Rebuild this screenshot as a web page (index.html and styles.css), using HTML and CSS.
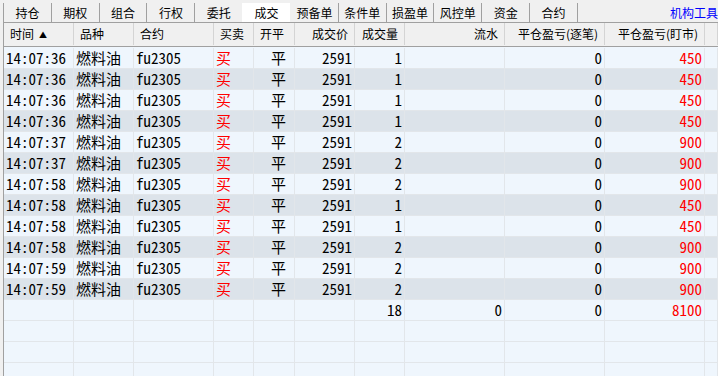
FILE: index.html
```html
<!DOCTYPE html>
<html lang="zh-CN">
<head>
    <meta charset="UTF-8">
    <title>成交</title>
    <link rel="stylesheet" href="styles.css">
</head>
<body>
<div class="tabbar">
    <span class="tab">持仓</span>
    <span class="tab">期权</span>
    <span class="tab">组合</span>
    <span class="tab">行权</span>
    <span class="tab">委托</span>
    <span class="tab active">成交</span>
    <span class="tab">预备单</span>
    <span class="tab">条件单</span>
    <span class="tab">损盈单</span>
    <span class="tab">风控单</span>
    <span class="tab">资金</span>
    <span class="tab">合约</span>
    <span class="tab last"></span>
    <span class="tools">机构工具</span>
</div>
<div class="grid">
    <div class="row head">
        <div class="th">时间<span class="sort">▲</span></div>
        <div class="th">品种</div>
        <div class="th">合约</div>
        <div class="th">买卖</div>
        <div class="th">开平</div>
        <div class="th num">成交价</div>
        <div class="th num">成交量</div>
        <div class="th num">流水</div>
        <div class="th num">平仓盈亏(逐笔)</div>
        <div class="th num">平仓盈亏(盯市)</div>
        <div class="th"></div>
    </div>
    <div class="body">
        <div class="row">
            <div class="td">14:07:36</div><div class="td">燃料油</div><div class="td">fu2305</div><div class="td buy">买</div><div class="td mid">平</div>
            <div class="td num">2591</div><div class="td num">1</div><div class="td"></div><div class="td num">0</div><div class="td num red">450</div><div class="td"></div>
        </div>
        <div class="row alt">
            <div class="td">14:07:36</div><div class="td">燃料油</div><div class="td">fu2305</div><div class="td buy">买</div><div class="td mid">平</div>
            <div class="td num">2591</div><div class="td num">1</div><div class="td"></div><div class="td num">0</div><div class="td num red">450</div><div class="td"></div>
        </div>
        <div class="row">
            <div class="td">14:07:36</div><div class="td">燃料油</div><div class="td">fu2305</div><div class="td buy">买</div><div class="td mid">平</div>
            <div class="td num">2591</div><div class="td num">1</div><div class="td"></div><div class="td num">0</div><div class="td num red">450</div><div class="td"></div>
        </div>
        <div class="row alt">
            <div class="td">14:07:36</div><div class="td">燃料油</div><div class="td">fu2305</div><div class="td buy">买</div><div class="td mid">平</div>
            <div class="td num">2591</div><div class="td num">1</div><div class="td"></div><div class="td num">0</div><div class="td num red">450</div><div class="td"></div>
        </div>
        <div class="row">
            <div class="td">14:07:37</div><div class="td">燃料油</div><div class="td">fu2305</div><div class="td buy">买</div><div class="td mid">平</div>
            <div class="td num">2591</div><div class="td num">2</div><div class="td"></div><div class="td num">0</div><div class="td num red">900</div><div class="td"></div>
        </div>
        <div class="row alt">
            <div class="td">14:07:37</div><div class="td">燃料油</div><div class="td">fu2305</div><div class="td buy">买</div><div class="td mid">平</div>
            <div class="td num">2591</div><div class="td num">2</div><div class="td"></div><div class="td num">0</div><div class="td num red">900</div><div class="td"></div>
        </div>
        <div class="row">
            <div class="td">14:07:58</div><div class="td">燃料油</div><div class="td">fu2305</div><div class="td buy">买</div><div class="td mid">平</div>
            <div class="td num">2591</div><div class="td num">2</div><div class="td"></div><div class="td num">0</div><div class="td num red">900</div><div class="td"></div>
        </div>
        <div class="row alt">
            <div class="td">14:07:58</div><div class="td">燃料油</div><div class="td">fu2305</div><div class="td buy">买</div><div class="td mid">平</div>
            <div class="td num">2591</div><div class="td num">1</div><div class="td"></div><div class="td num">0</div><div class="td num red">450</div><div class="td"></div>
        </div>
        <div class="row">
            <div class="td">14:07:58</div><div class="td">燃料油</div><div class="td">fu2305</div><div class="td buy">买</div><div class="td mid">平</div>
            <div class="td num">2591</div><div class="td num">1</div><div class="td"></div><div class="td num">0</div><div class="td num red">450</div><div class="td"></div>
        </div>
        <div class="row alt">
            <div class="td">14:07:58</div><div class="td">燃料油</div><div class="td">fu2305</div><div class="td buy">买</div><div class="td mid">平</div>
            <div class="td num">2591</div><div class="td num">2</div><div class="td"></div><div class="td num">0</div><div class="td num red">900</div><div class="td"></div>
        </div>
        <div class="row">
            <div class="td">14:07:59</div><div class="td">燃料油</div><div class="td">fu2305</div><div class="td buy">买</div><div class="td mid">平</div>
            <div class="td num">2591</div><div class="td num">2</div><div class="td"></div><div class="td num">0</div><div class="td num red">900</div><div class="td"></div>
        </div>
        <div class="row alt">
            <div class="td">14:07:59</div><div class="td">燃料油</div><div class="td">fu2305</div><div class="td buy">买</div><div class="td mid">平</div>
            <div class="td num">2591</div><div class="td num">2</div><div class="td"></div><div class="td num">0</div><div class="td num red">900</div><div class="td"></div>
        </div>
        <!-- totals -->
        <div class="row">
            <div class="td"></div><div class="td"></div><div class="td"></div><div class="td"></div><div class="td"></div>
            <div class="td"></div><div class="td num">18</div><div class="td num">0</div><div class="td num">0</div><div class="td num red">8100</div><div class="td"></div>
        </div>
        <div class="row">
            <div class="td"></div><div class="td"></div><div class="td"></div><div class="td"></div><div class="td"></div>
            <div class="td"></div><div class="td"></div><div class="td"></div><div class="td"></div><div class="td"></div><div class="td"></div>
        </div>
        <div class="row">
            <div class="td"></div><div class="td"></div><div class="td"></div><div class="td"></div><div class="td"></div>
            <div class="td"></div><div class="td"></div><div class="td"></div><div class="td"></div><div class="td"></div><div class="td"></div>
        </div>
        <div class="row">
            <div class="td"></div><div class="td"></div><div class="td"></div><div class="td"></div><div class="td"></div>
            <div class="td"></div><div class="td"></div><div class="td"></div><div class="td"></div><div class="td"></div><div class="td"></div>
        </div>
    </div>
</div>
</body>
</html>
```

FILE: styles.css
```css
body {
    margin: 0;
    width: 718px;
    height: 376px;
    overflow: hidden;
    background-color: #f0f0f0;
    font-family: "Noto Sans CJK SC", sans-serif;
    font-size: 12px;
    color: #000000;
}
.tabbar {
    display: flex;
    align-items: flex-end;
    height: 22px;
    padding-left: 3px;
    white-space: nowrap;
}
.tab {
    width: 48px;
    height: 19px;
    line-height: 19px;
    text-align: center;
    border-left: 1px solid #a0a0a0;
    box-sizing: border-box;
}
.tab.active {
    background-color: #ffffff;
    border-left-color: #ffffff;
}
.tab.active + .tab {
    border-left-color: transparent;
}
.tab.last {
    width: 1px;
}
.tools {
    margin-left: 92px;
    height: 19px;
    line-height: 19px;
    color: #0000ff;
}
.grid {
    margin-left: 3px;
    height: 354px;
    border-left: 1px solid #a0a0a0;
    border-top: 1px solid #a0a0a0;
    background-color: #eff6fd;
}
.row {
    display: grid;
    grid-template-columns: 70px 60px 80px 40px 41px 60px 50px 100px 100px 100px 1fr;
}
.head {
    height: 23px;
    background-color: #f0f0f0;
    border-bottom: 1px solid #a0a0a0;
}
.th {
    height: 22px;
    line-height: 22px;
    padding: 0 6px;
    border-right: 1px solid #d4d4d4;
    white-space: nowrap;
    overflow: hidden;
}
.th.num {
    text-align: right;
}
.sort {
    margin-left: 5px;
    font-size: 8px;
    vertical-align: 1px;
}
.body {
    padding-top: 1px;
}
.td {
    height: 21px;
    line-height: 20px;
    padding: 0 2px;
    box-sizing: border-box;
    border-right: 1px solid #e2e6ea;
    border-bottom: 1px solid #e2e6ea;
    font-family: "Noto Sans Mono CJK SC", "Liberation Mono", monospace;
    font-size: 15px;
    white-space: nowrap;
}
.row.alt {
    background-color: #dce3ea;
}
.td.num {
    text-align: right;
}
.td.mid {
    text-align: center;
    padding-left: 11px;
}
.buy, .red {
    color: #ff0000;
}
```
